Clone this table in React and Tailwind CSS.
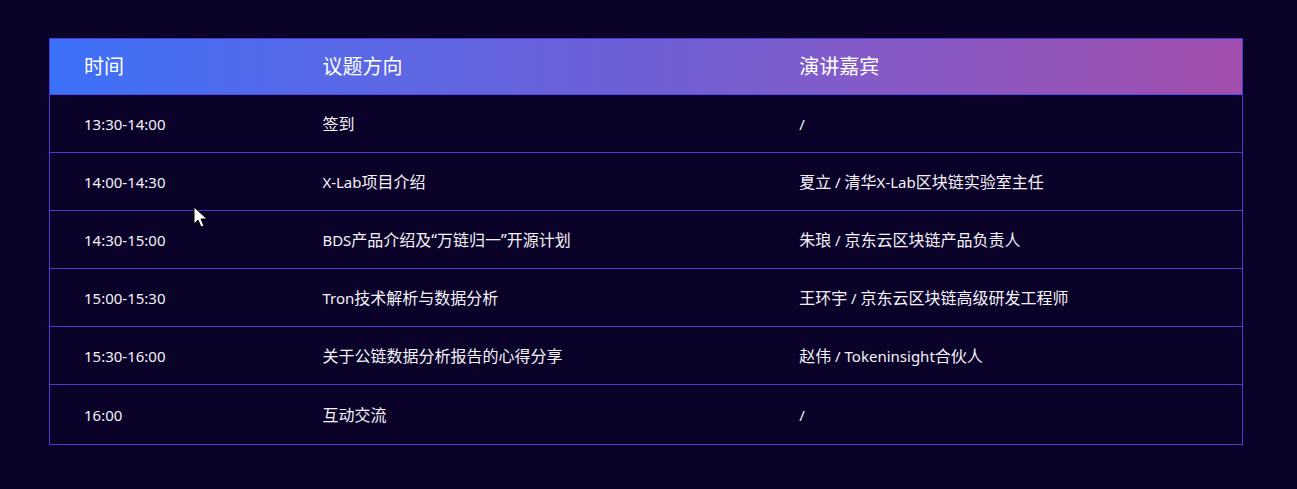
import React from "react";

const rows = [
  { time: "13:30-14:00", topic: "签到", speaker: "/" },
  { time: "14:00-14:30", topic: "X-Lab项目介绍", speaker: "夏立 / 清华X-Lab区块链实验室主任" },
  { time: "14:30-15:00", topic: "BDS产品介绍及“万链归一”开源计划", speaker: "朱琅 / 京东云区块链产品负责人" },
  { time: "15:00-15:30", topic: "Tron技术解析与数据分析", speaker: "王环宇 / 京东云区块链高级研发工程师" },
  { time: "15:30-16:00", topic: "关于公链数据分析报告的心得分享", speaker: "赵伟 / Tokeninsight合伙人" },
  { time: "16:00", topic: "互动交流", speaker: "/" },
];

// CJK glyphs sit a bit larger than the latin text in the original
const Mixed = ({ text }) => {
  const parts = text.split(/([\u4e00-\u9fff\u201c\u201d\u3000-\u303f]+)/).filter(Boolean);
  return (
    <>
      {parts.map((p, i) =>
        /[\u4e00-\u9fff\u201c\u201d]/.test(p) ? (
          <span key={i} className="text-[16px]">{p}</span>
        ) : (
          <span key={i} className="text-[15px]">{p}</span>
        )
      )}
    </>
  );
};

const Cursor = () => (
  <svg
    className="absolute left-[193px] top-[206px] pointer-events-none"
    width="16"
    height="24"
    viewBox="0 0 16 24"
  >
    <path
      d="M1 1 L1 18 L5 14 L8 21 L11 20 L8 13 L14 13 Z"
      fill="#ffffff"
      stroke="#000000"
      strokeWidth="1"
      strokeLinejoin="round"
    />
  </svg>
);

const App = () => {
  return (
    <div
      className="relative w-full min-h-[489px] bg-[#0a0228] pt-[38px] px-[49px]"
      style={{ fontFamily: '"Noto Sans", "Noto Sans CJK SC", sans-serif' }}
    >
      <div className="w-[1194px] border border-[#4a3bd0]">
        <div className="flex h-[56px] items-center bg-gradient-to-r from-[#3a70f8] via-[#6e5fd6] to-[#a24eae] text-white text-[20px] border-b border-[#5548f0]">
          <div className="w-[20%] pl-[34px]">时间</div>
          <div className="w-[40%] pl-[34px]">议题方向</div>
          <div className="w-[40%] pl-[34px]">演讲嘉宾</div>
        </div>
        {rows.map((row, i) => (
          <div
            key={row.time}
            className={
              i === rows.length - 1
                ? "flex h-[59px] items-center text-[#f4f2f8] leading-[20px]"
                : "flex h-[58px] items-center text-[#f4f2f8] leading-[20px] border-b border-[#4a3bd0]"
            }
          >
            <div className="w-[20%] pl-[34px]"><Mixed text={row.time} /></div>
            <div className="w-[40%] pl-[34px]"><Mixed text={row.topic} /></div>
            <div className="w-[40%] pl-[34px]"><Mixed text={row.speaker} /></div>
          </div>
        ))}
      </div>
      <Cursor />
    </div>
  );
};

export default App;
